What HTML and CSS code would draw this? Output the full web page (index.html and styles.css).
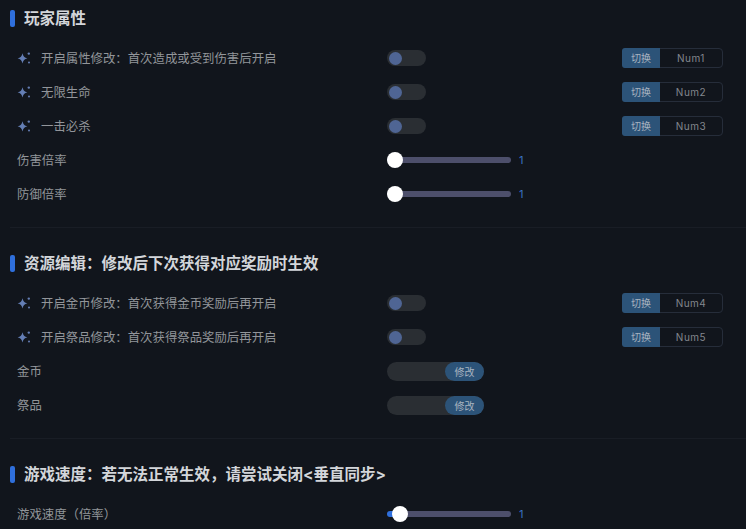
FILE: index.html
```html
<!DOCTYPE html>
<html lang="zh-CN">
<head>
  <meta charset="UTF-8">
  <title>玩家属性</title>
  <link rel="stylesheet" href="styles.css">
</head>
<body>
  <svg class="defs" width="0" height="0">
    <symbol id="spark" viewBox="0 0 14 14">
      <path d="M5.5 2.2 C6.2 5.2 7.4 6.5 10.4 7.3 C7.4 8.1 6.2 9.4 5.5 12.4 C4.8 9.4 3.6 8.1 .6 7.3 C3.6 6.5 4.8 5.2 5.5 2.2 Z"/>
      <circle cx="11.8" cy="2.6" r="1.2"/>
      <circle cx="12" cy="11.4" r="1"/>
    </symbol>
  </svg>

  <section class="group">
    <h2 class="title">玩家属性</h2>
    <div class="row">
      <div class="label"><svg class="spark"><use href="#spark"/></svg>开启属性修改：首次造成或受到伤害后开启</div>
      <div class="switch"><i></i></div>
      <div class="hotkey"><span>切换</span><b>Num1</b></div>
    </div>
    <div class="row">
      <div class="label"><svg class="spark"><use href="#spark"/></svg>无限生命</div>
      <div class="switch"><i></i></div>
      <div class="hotkey"><span>切换</span><b>Num2</b></div>
    </div>
    <div class="row">
      <div class="label"><svg class="spark"><use href="#spark"/></svg>一击必杀</div>
      <div class="switch"><i></i></div>
      <div class="hotkey"><span>切换</span><b>Num3</b></div>
    </div>
    <div class="row">
      <div class="label">伤害倍率</div>
      <div class="slider"><div class="track"><i></i></div><em>1</em></div>
    </div>
    <div class="row">
      <div class="label">防御倍率</div>
      <div class="slider"><div class="track"><i></i></div><em>1</em></div>
    </div>
  </section>

  <section class="group">
    <h2 class="title">资源编辑：修改后下次获得对应奖励时生效</h2>
    <div class="row">
      <div class="label"><svg class="spark"><use href="#spark"/></svg>开启金币修改：首次获得金币奖励后再开启</div>
      <div class="switch"><i></i></div>
      <div class="hotkey"><span>切换</span><b>Num4</b></div>
    </div>
    <div class="row">
      <div class="label"><svg class="spark"><use href="#spark"/></svg>开启祭品修改：首次获得祭品奖励后再开启</div>
      <div class="switch"><i></i></div>
      <div class="hotkey"><span>切换</span><b>Num5</b></div>
    </div>
    <div class="row">
      <div class="label">金币</div>
      <div class="edit"><button>修改</button></div>
    </div>
    <div class="row">
      <div class="label">祭品</div>
      <div class="edit"><button>修改</button></div>
    </div>
  </section>

  <section class="group last">
    <h2 class="title">游戏速度：若无法正常生效，请尝试关闭&lt;垂直同步&gt;</h2>
    <div class="row">
      <div class="label">游戏速度（倍率）</div>
      <div class="slider moved"><div class="track"><i></i></div><em>1</em></div>
    </div>
  </section>
</body>
</html>
```

FILE: styles.css
```css
html, body {
  height: 100%;
}
body {
  margin: 0;
  padding-top: 7px;
  box-sizing: border-box;
  background-color: #11151c;
  color: #92959a;
  font-family: Inter, "Noto Sans CJK SC", sans-serif;
  overflow: hidden;
}
.defs {
  position: absolute;
}
.group {
  padding-bottom: 16px;
  margin: 0 0 24px 10px;
  border-bottom: 1px solid #191d25;
}
.group.last {
  border-bottom: none;
  margin-bottom: 0;
}
.title {
  display: flex;
  align-items: center;
  height: 21px;
  padding-top: 1px;
  margin: 0 0 12px;
  color: #d3d6da;
  font-size: 15.5px;
  font-weight: 700;
  line-height: 21px;
}
.title::before {
  content: "";
  width: 5px;
  height: 17px;
  margin: -1px 9px 0 0;
  border-radius: 2px;
  background-color: #2f6fdc;
}
.row {
  display: grid;
  grid-template-columns: 370px 235px 101px;
  align-items: center;
  height: 34px;
  padding-left: 7px;
}
.label {
  display: flex;
  align-items: center;
  font-size: 12.4px;
  white-space: nowrap;
}
.spark {
  width: 14px;
  height: 14px;
  margin-right: 10px;
  fill: #647eb4;
}
.switch {
  width: 39px;
  height: 16px;
  padding: 1.5px;
  box-sizing: border-box;
  border-radius: 8px;
  background-color: #2a2e33;
}
.switch i {
  display: block;
  width: 13px;
  height: 13px;
  border-radius: 50%;
  background-color: #4f6594;
}
.hotkey {
  display: flex;
  width: 101px;
  height: 20px;
  box-sizing: border-box;
  border: 1px solid #262d3a;
  border-radius: 4px;
  font-size: 10px;
  line-height: 18px;
  text-align: center;
}
.hotkey span {
  width: 38px;
  margin: -1px 0 -1px -1px;
  border-radius: 3px 0 0 3px;
  background-color: #2c5378;
  color: #a9b4c0;
  line-height: 20px;
}
.hotkey b {
  flex: 1;
  color: #83878e;
  font-weight: 400;
  letter-spacing: .5px;
}
.slider {
  display: flex;
  align-items: center;
  grid-column: 2 / 4;
}
.track {
  position: relative;
  width: 124px;
  height: 6px;
  border-radius: 3px;
  background-color: #4d4f6b;
}
.track i {
  position: absolute;
  top: -5px;
  left: 0;
  width: 16px;
  height: 16px;
  border-radius: 50%;
  background-color: #fff;
}
.moved .track {
  background: linear-gradient(to right, #2f6fdc 10px, #4d4f6b 10px);
}
.moved .track i {
  left: 5px;
}
.slider em {
  margin-left: 8px;
  color: #3a70c0;
  font-size: 11px;
  font-style: normal;
}
.edit {
  display: flex;
  justify-content: flex-end;
  width: 97px;
  height: 19px;
  border-radius: 10px;
  background-color: #2a2e33;
}
.edit button {
  width: 39px;
  padding: 0;
  border: none;
  border-radius: 10px;
  background-color: #2c5378;
  color: #a9b4c0;
  font-family: inherit;
  font-size: 10px;
}
```
